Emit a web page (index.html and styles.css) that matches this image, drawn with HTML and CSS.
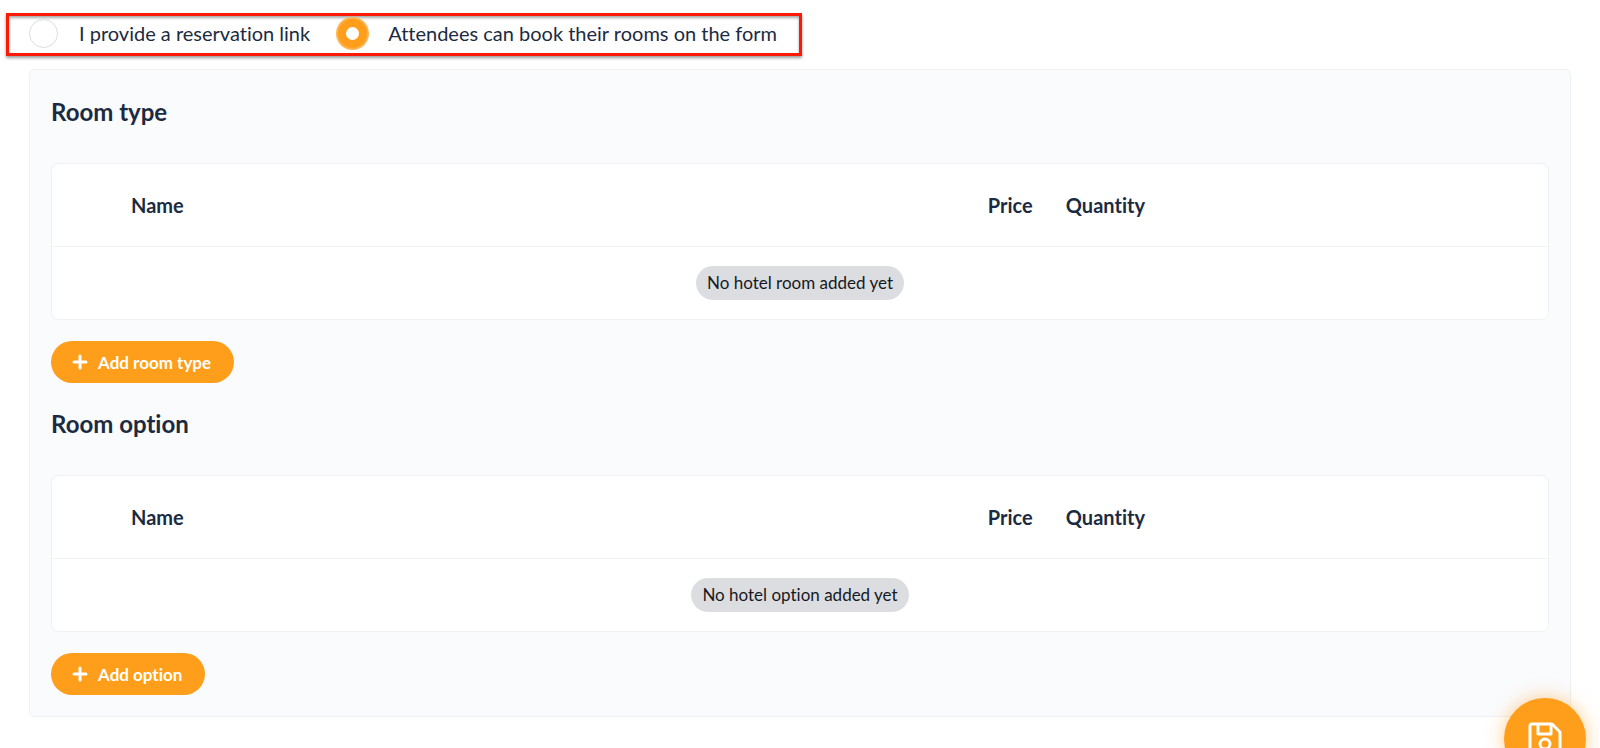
FILE: index.html
```html
<!DOCTYPE html>
<html lang="en">
<head>
<meta charset="utf-8">
<title>Hotel rooms</title>
<link rel="stylesheet" href="styles.css">
</head>
<body>
<form class="page">
  <div class="choices" role="radiogroup" aria-label="Booking mode">
    <label class="choice"><input class="radio" type="radio" name="mode"><span>I provide a reservation link</span></label>
    <label class="choice"><input class="radio" type="radio" name="mode" checked><span>Attendees can book their rooms on the form</span></label>
  </div>
  <main class="panel">
    <section class="group">
      <h2 class="title">Room type</h2>
      <div class="card">
        <table class="table">
          <thead><tr><th class="col-handle"></th><th class="col-name">Name</th><th class="col-price">Price</th><th class="col-quantity">Quantity</th></tr></thead>
          <tbody><tr><td colspan="4"><span class="badge">No hotel room added yet</span></td></tr></tbody>
        </table>
      </div>
      <button class="add" type="button"><svg class="plus" viewBox="0 0 16 16" aria-hidden="true"><path d="M8 2v12M2 8h12"/></svg>Add room type</button>
    </section>
    <section class="group">
      <h2 class="title">Room option</h2>
      <div class="card">
        <table class="table">
          <thead><tr><th class="col-handle"></th><th class="col-name">Name</th><th class="col-price">Price</th><th class="col-quantity">Quantity</th></tr></thead>
          <tbody><tr><td colspan="4"><span class="badge">No hotel option added yet</span></td></tr></tbody>
        </table>
      </div>
      <button class="add" type="button"><svg class="plus" viewBox="0 0 16 16" aria-hidden="true"><path d="M8 2v12M2 8h12"/></svg>Add option</button>
    </section>
  </main>
  <button class="save" type="submit" aria-label="Save"><svg class="disk" viewBox="0 0 34 34" aria-hidden="true"><path d="M4 2h20l8 8v20a2 2 0 0 1-2 2H4a2 2 0 0 1-2-2V4a2 2 0 0 1 2-2z"/><path d="M10 2v10h13V2"/><circle cx="17" cy="22" r="5"/></svg></button>
</form>
</body>
</html>
```
FILE: styles.css
```css
* {
  box-sizing: border-box;
}

body {
  margin: 0;
  background: #fff;
  color: #1c2b41;
  font-family: Lato, "Liberation Sans", sans-serif;
  font-size: 20px;
  font-variant-ligatures: none;
  line-height: 24px;
}

.page {
  padding: 13px 29px 31px;
}

.choices {
  display: flex;
  gap: 28px;
  width: fit-content;
  height: 43px;
  margin: 0 0 13px -23px;
  padding: 0 22px 3px 20px;
  align-items: center;
  border: 3px solid #fb1b05;
  box-shadow: 0 2px 3px rgba(0, 0, 0, 0.4), inset 0 2px 3px rgba(0, 0, 0, 0.35);
}

.choice {
  display: flex;
  align-items: center;
  gap: 21px;
}

.radio {
  appearance: none;
  flex: none;
  width: 29px;
  height: 29px;
  margin: 0;
  border: 1px solid #d9dee4;
  border-radius: 50%;
  background: #fff;
}

.radio:checked {
  border: 8px solid #ff9e1b;
  box-shadow: 0 0 0 2px #ffb451;
}

.panel {
  display: flex;
  flex-direction: column;
  gap: 26px;
  padding: 27px 21px 21px;
  border: 1px solid #edf0f3;
  border-radius: 6px;
  background: #fafbfd;
}

.title {
  margin: 0 0 36px;
  font-size: 24px;
  line-height: 30px;
  font-weight: 700;
}

.card {
  margin-bottom: 21px;
  overflow: hidden;
  border: 1px solid #eff1f4;
  border-radius: 8px;
  background: #fff;
}

.table {
  width: 100%;
  border-collapse: collapse;
  table-layout: fixed;
}

.table th {
  height: 82px;
  padding: 0 16px;
  border-bottom: 1px solid #f1f2f4;
  text-align: left;
  font-weight: 700;
}

.table td {
  height: 73px;
  padding: 0;
  text-align: center;
}

.col-handle {
  width: 63px;
}

.col-price {
  width: 78px;
}

.col-quantity {
  width: 33.3%;
}

.badge {
  display: inline-block;
  padding: 5px 11px;
  border-radius: 17px;
  background: #dcdde1;
  color: #16191e;
  font-size: 17px;
}

.add {
  display: flex;
  align-items: center;
  gap: 10px;
  height: 42px;
  padding: 0 23px 0 21px;
  border: 0;
  border-radius: 21px;
  background: #ff9e1b;
  color: #fff;
  font-family: inherit;
  font-size: 17px;
  font-weight: 700;
  font-variant-ligatures: none;
}

.plus {
  width: 16px;
  height: 16px;
  fill: none;
  stroke: #fff;
  stroke-width: 3;
  stroke-linecap: round;
}

.save {
  position: fixed;
  right: 14px;
  bottom: -32px;
  display: grid;
  place-items: center;
  width: 82px;
  height: 82px;
  padding: 0;
  border: 0;
  border-radius: 50%;
  background: #ff9e1b;
  box-shadow: 0 0 18px rgba(255, 158, 27, 0.5);
}

.disk {
  width: 34px;
  height: 34px;
  fill: none;
  stroke: #fff;
  stroke-width: 3;
  stroke-linejoin: round;
}
```
